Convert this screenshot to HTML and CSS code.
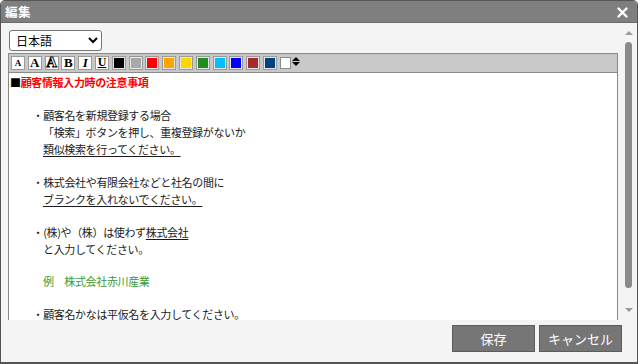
FILE: index.html
```html
<!DOCTYPE html>
<html lang="ja">
  <head>
    <meta charset="UTF-8" />
    <title>編集</title>
    <link rel="stylesheet" href="styles.css">
  </head>
  <body>
    <div class="dialog">
      <!-- title bar -->
      <div class="titlebar">
        <span class="title">編集</span>
        <svg class="close" width="11" height="11" viewBox="0 0 11 11">
          <path d="M1.5 1.5 L9.5 9.5 M9.5 1.5 L1.5 9.5" stroke="#ffffff" stroke-width="2.4" stroke-linecap="round" />
        </svg>
      </div>

      <div class="dialog-body">
        <div class="body-main">
          <select class="lang-select">
            <option>日本語</option>
            <option>English</option>
          </select>

          <div class="editor">
            <div class="toolbar">
              <span class="tool tool-a1">A</span>
              <span class="tool tool-a2">A</span>
              <span class="tool tool-a3">A</span>
              <span class="tool tool-b">B</span>
              <span class="tool tool-i">I</span>
              <span class="tool tool-u">U</span>
              <span class="swatch" style="background:#000000"></span>
              <span class="swatch" style="background:#a9a9a9"></span>
              <span class="swatch" style="background:#ff0000"></span>
              <span class="swatch" style="background:#ffa500"></span>
              <span class="swatch" style="background:#ffd700"></span>
              <span class="swatch" style="background:#228b22"></span>
              <span class="swatch" style="background:#00bfff"></span>
              <span class="swatch" style="background:#0000ff"></span>
              <span class="swatch" style="background:#a52a2a"></span>
              <span class="swatch" style="background:#00407f"></span>
              <span class="bg-box"></span>
              <span class="updown">
                <span class="tri-up"></span>
                <span class="tri-down"></span>
              </span>
            </div>

            <div class="content">
              <div class="line heading"><span class="square">■</span>顧客情報入力時の注意事項</div>
              <div class="line"></div>
              <div class="block">
                <div class="line bullet">・顧客名を新規登録する場合</div>
                <div class="line">「検索」ボタンを押し、重複登録がないか</div>
                <div class="line"><u>類似検索を行ってください。</u></div>
                <div class="line"></div>
                <div class="line bullet">・株式会社や有限会社などと社名の間に</div>
                <div class="line"><u>ブランクを入れないでください。</u></div>
                <div class="line"></div>
                <div class="line bullet">・(株)や（株）は使わず<u>株式会社</u></div>
                <div class="line">と入力してください。</div>
                <div class="line short"></div>
                <div class="line example">例　株式会社赤川産業</div>
                <div class="line short"></div>
                <div class="line bullet">・顧客名かなは<u>平仮名を入力</u>してください。</div>
                <div class="line"></div>
              </div>
            </div>
          </div>
        </div>

        <!-- scrollbar of the body area -->
        <div class="scrollbar">
          <span class="sb-up"></span>
          <span class="sb-thumb"></span>
          <span class="sb-down"></span>
        </div>
      </div>

      <div class="footer">
        <button class="btn">保存</button>
        <button class="btn">キャンセル</button>
      </div>
    </div>
  </body>
</html>
```

FILE: styles.css
```css
/* basic styling */
* {
  margin: 0;
  padding: 0;
  box-sizing: border-box;
}
body {
  background: #ffffff;
  font-family: "Noto Sans CJK JP", "Noto Sans", sans-serif;
  color: #1a1a1a;
}

/* dialog frame */
.dialog {
  width: 638px;
  height: 364px;
  border: 1px solid #555555;
  border-bottom-width: 2px;
  border-radius: 5px 5px 0 0;
  background: #f4f4f4;
  display: flex;
  flex-direction: column;
  overflow: hidden;
}

/* title bar */
.titlebar {
  height: 22px;
  background: #7f7f7f;
  border-bottom: 1px solid #6a6a6a;
  display: flex;
  align-items: center;
  justify-content: space-between;
  padding: 0 9px 0 4px;
  color: #ffffff;
}
.title {
  font-size: 12.5px;
  font-weight: bold;
  letter-spacing: 0.5px;
}
.close {
  display: block;
  margin-top: 2px;
}

/* body with its own scroll area */
.dialog-body {
  height: 297px;
  display: flex;
}
.body-main {
  flex: 1;
  overflow: hidden;
  padding: 7px 0 0 7px;
}
.lang-select {
  display: block;
  width: 93px;
  height: 21px;
  margin-left: 1px;
  font-family: "Noto Sans CJK JP", sans-serif;
  font-size: 12px;
  color: #000000;
  background: #ffffff;
  border: 1px solid #767676;
  border-radius: 3px;
  padding-left: 2px;
}

/* editor */
.editor {
  margin-top: 2px;
  width: 610px;
  height: 320px;
  border: 1px solid #8a8a8a;
  border-bottom: none;
  background: #ffffff;
}
.toolbar {
  height: 19px;
  background: #c8c8c8;
  border-bottom: 1px solid #8a8a8a;
  display: flex;
  align-items: center;
  gap: 2.8px;
  padding-left: 2px;
}
.tool {
  width: 14px;
  height: 14px;
  border: 1px solid #9a9a9a;
  background: #ffffff;
  font-family: "Liberation Serif", serif;
  font-weight: bold;
  color: #000000;
  display: flex;
  align-items: flex-end;
  justify-content: center;
  line-height: 1;
}
.tool-a1 {
  font-size: 9px;
  padding-bottom: 1px;
}
.tool-a2 {
  font-size: 13px;
}
.tool-a3 {
  font-size: 15px;
  color: #ffffff;
  -webkit-text-stroke: 0.9px #000000;
  line-height: 0.85;
}
.tool-b {
  font-size: 13px;
}
.tool-i {
  font-size: 13px;
  font-style: italic;
}
.tool-u {
  font-size: 12px;
  text-decoration: underline;
  padding-bottom: 1px;
}
.swatch {
  width: 14px;
  height: 14px;
  border: 1px solid #9a9a9a;
  box-shadow: inset 0 0 0 1px #e6e6e6;
}
.bg-box {
  width: 11px;
  height: 12px;
  background: #ffffff;
  border: 1px solid #8a8a8a;
  margin-left: 0.5px;
}
.updown {
  display: flex;
  flex-direction: column;
  gap: 1px;
  margin-left: -1.8px;
  margin-top: -3px;
}
.tri-up {
  border-left: 4px solid transparent;
  border-right: 4px solid transparent;
  border-bottom: 4px solid #000000;
}
.tri-down {
  border-left: 4px solid transparent;
  border-right: 4px solid transparent;
  border-top: 4px solid #000000;
}

/* editor text */
.content {
  padding: 1px 0 0 1px;
  font-size: 11px;
  letter-spacing: -0.35px;
}
.line {
  height: 16.7px;
  line-height: 16.7px;
  white-space: nowrap;
}
.line.short {
  height: 15.8px;
}
.heading {
  color: #ff0000;
  font-weight: bold;
}
.square {
  color: #000000;
  font-weight: normal;
}
.block {
  padding-left: 33px;
}
.bullet {
  text-indent: -10.5px;
}
.example {
  color: #3a9a3a;
}
u {
  text-underline-offset: 2px;
}

/* fake scrollbar */
.scrollbar {
  width: 18px;
  display: flex;
  flex-direction: column;
  align-items: center;
  padding: 8px 0 8px 1px;
}
.sb-up {
  border-left: 4px solid transparent;
  border-right: 4px solid transparent;
  border-bottom: 4px solid #9a9a9a;
}
.sb-thumb {
  width: 7px;
  height: 246px;
  margin: 7px 0 auto;
  background: #8a8a8a;
  border-radius: 4px;
}
.sb-down {
  border-left: 4px solid transparent;
  border-right: 4px solid transparent;
  border-top: 4px solid #9a9a9a;
}

/* footer buttons */
.footer {
  flex: 1;
  display: flex;
  justify-content: flex-end;
  align-items: flex-start;
  gap: 4px;
  padding: 5px 15px 0 0;
}
.btn {
  width: 83px;
  height: 27px;
  background: #767676;
  border: 1px solid #5c5c5c;
  color: #ffffff;
  font-family: "Noto Sans CJK JP", sans-serif;
  font-size: 13px;
  cursor: pointer;
}
.btn:hover {
  background: #666666;
}
```
